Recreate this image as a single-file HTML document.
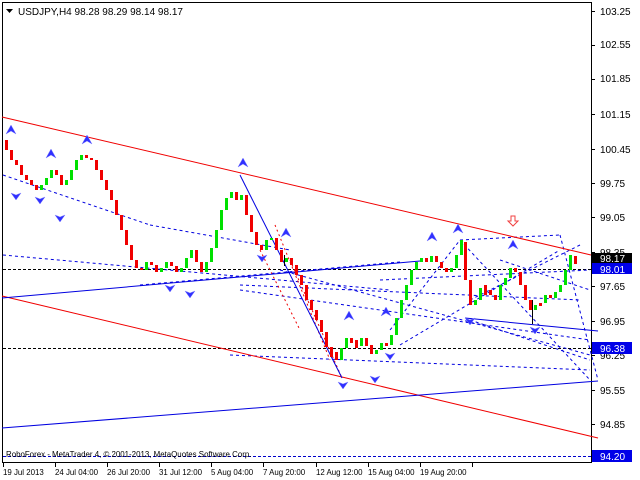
<!DOCTYPE html>
<html><head><meta charset="utf-8"><style>
body{margin:0;background:#fff;width:640px;height:480px;overflow:hidden;font-family:"Liberation Sans",sans-serif}
svg{display:block}
text{font-family:"Liberation Sans",sans-serif;font-size:10px}
text.s,.s text{font-size:7.9px}
.g{fill:#00e000}.r{fill:#f00000}
</style></head><body>
<svg width="640" height="480" viewBox="0 0 640 480">
<rect x="0" y="0" width="640" height="480" fill="#fff"/>
<rect x="2.5" y="2.5" width="589" height="460" fill="none" stroke="#000"/>
<line x1="3" y1="269.5" x2="591" y2="269.5" stroke="#000" stroke-dasharray="3,2"/>
<line x1="3" y1="348.5" x2="591" y2="348.5" stroke="#000" stroke-dasharray="3,2"/>
<line x1="3" y1="456.5" x2="591" y2="456.5" stroke="#00c" stroke-dasharray="3,2"/>
<g stroke="#0000e0" stroke-dasharray="3,3" fill="none" stroke-width="1">
<line x1="3" y1="175" x2="150" y2="225"/>
<line x1="150" y1="225" x2="290" y2="250"/>
<line x1="3" y1="255" x2="390" y2="290"/>
<line x1="140" y1="285" x2="400" y2="262"/>
<line x1="240" y1="285" x2="580" y2="300"/>
<line x1="240" y1="290" x2="590" y2="340"/>
<line x1="280" y1="270" x2="590" y2="355"/>
<line x1="390" y1="330" x2="460" y2="240"/>
<line x1="400" y1="345" x2="560" y2="250"/>
<line x1="460" y1="240" x2="560" y2="235"/>
<line x1="460" y1="240" x2="590" y2="380"/>
<line x1="380" y1="280" x2="590" y2="270"/>
<line x1="470" y1="320" x2="590" y2="360"/>
<line x1="500" y1="260" x2="590" y2="290"/>
<line x1="560" y1="235" x2="598" y2="380"/>
<line x1="470" y1="300" x2="580" y2="245"/>
<line x1="230" y1="355" x2="590" y2="370"/>
</g>
<g stroke="#f00000" stroke-dasharray="2,3" fill="none">
<line x1="275" y1="225" x2="330" y2="360"/>
<line x1="290" y1="260" x2="342" y2="378"/>
<line x1="260" y1="250" x2="300" y2="330"/>
</g>
<line x1="2" y1="117" x2="591" y2="255" stroke="#f00000"/>
<line x1="2" y1="296" x2="598" y2="438" stroke="#f00000"/>
<line x1="2" y1="298" x2="420" y2="261" stroke="#0000e0"/>
<line x1="2" y1="428" x2="598" y2="381" stroke="#0000e0"/>
<line x1="240" y1="175" x2="342" y2="378" stroke="#0000e0"/>
<line x1="465" y1="318" x2="598" y2="331" stroke="#0000e0"/>
<g>
<rect class="r" x="5" y="140" width="3" height="10"/>
<rect class="r" x="10" y="150" width="3" height="10"/>
<rect class="r" x="15" y="160" width="3" height="5"/>
<rect class="r" x="20" y="165" width="3" height="10"/>
<rect class="r" x="25" y="175" width="3" height="5"/>
<rect class="r" x="30" y="180" width="3" height="5"/>
<rect class="r" x="35" y="185" width="3" height="5"/>
<rect class="g" x="40" y="185" width="3" height="5"/>
<rect class="g" x="45" y="178" width="3" height="7"/>
<rect class="g" x="50" y="170" width="3" height="8"/>
<rect class="r" x="55" y="170" width="3" height="5"/>
<rect class="r" x="60" y="175" width="3" height="10"/>
<rect class="g" x="65" y="180" width="3" height="5"/>
<rect class="g" x="70" y="170" width="3" height="10"/>
<rect class="g" x="75" y="160" width="3" height="10"/>
<rect class="g" x="80" y="155" width="3" height="5"/>
<rect class="r" x="85" y="155" width="3" height="3"/>
<rect class="r" x="90" y="158" width="3" height="2"/>
<rect class="r" x="95" y="160" width="3" height="10"/>
<rect class="r" x="100" y="170" width="3" height="10"/>
<rect class="r" x="105" y="180" width="3" height="10"/>
<rect class="r" x="110" y="190" width="3" height="10"/>
<rect class="r" x="115" y="200" width="3" height="15"/>
<rect class="r" x="120" y="215" width="3" height="15"/>
<rect class="r" x="125" y="230" width="3" height="15"/>
<rect class="r" x="130" y="245" width="3" height="15"/>
<rect class="r" x="135" y="260" width="3" height="8"/>
<rect class="r" x="140" y="268" width="3" height="2"/>
<rect class="g" x="145" y="262" width="3" height="8"/>
<rect class="r" x="150" y="262" width="3" height="3"/>
<rect class="r" x="155" y="265" width="3" height="7"/>
<rect class="g" x="160" y="268" width="3" height="4"/>
<rect class="g" x="165" y="262" width="3" height="6"/>
<rect class="r" x="170" y="262" width="3" height="4"/>
<rect class="r" x="175" y="266" width="3" height="6"/>
<rect class="g" x="180" y="268" width="3" height="4"/>
<rect class="g" x="185" y="258" width="3" height="10"/>
<rect class="g" x="190" y="250" width="3" height="8"/>
<rect class="r" x="195" y="250" width="3" height="12"/>
<rect class="r" x="200" y="262" width="3" height="10"/>
<rect class="g" x="205" y="262" width="3" height="10"/>
<rect class="g" x="210" y="248" width="3" height="14"/>
<rect class="g" x="215" y="230" width="3" height="18"/>
<rect class="g" x="220" y="210" width="3" height="20"/>
<rect class="g" x="225" y="198" width="3" height="12"/>
<rect class="g" x="230" y="192" width="3" height="6"/>
<rect class="r" x="235" y="192" width="3" height="8"/>
<rect class="g" x="240" y="195" width="3" height="5"/>
<rect class="r" x="245" y="195" width="3" height="20"/>
<rect class="r" x="250" y="215" width="3" height="17"/>
<rect class="r" x="255" y="232" width="3" height="13"/>
<rect class="r" x="260" y="245" width="3" height="5"/>
<rect class="g" x="265" y="240" width="3" height="10"/>
<rect class="g" x="270" y="238" width="3" height="2"/>
<rect class="r" x="275" y="238" width="3" height="12"/>
<rect class="r" x="280" y="250" width="3" height="12"/>
<rect class="g" x="285" y="258" width="3" height="4"/>
<rect class="r" x="290" y="258" width="3" height="7"/>
<rect class="r" x="295" y="265" width="3" height="10"/>
<rect class="r" x="300" y="275" width="3" height="10"/>
<rect class="r" x="305" y="285" width="3" height="15"/>
<rect class="r" x="310" y="300" width="3" height="10"/>
<rect class="r" x="315" y="310" width="3" height="10"/>
<rect class="r" x="320" y="320" width="3" height="12"/>
<rect class="r" x="325" y="332" width="3" height="15"/>
<rect class="r" x="330" y="347" width="3" height="10"/>
<rect class="r" x="335" y="352" width="3" height="8"/>
<rect class="g" x="340" y="348" width="3" height="12"/>
<rect class="g" x="345" y="338" width="3" height="10"/>
<rect class="r" x="350" y="338" width="3" height="5"/>
<rect class="r" x="355" y="340" width="3" height="8"/>
<rect class="g" x="360" y="338" width="3" height="8"/>
<rect class="r" x="365" y="338" width="3" height="8"/>
<rect class="r" x="370" y="345" width="3" height="9"/>
<rect class="g" x="375" y="350" width="3" height="4"/>
<rect class="g" x="380" y="343" width="3" height="7"/>
<rect class="r" x="385" y="343" width="3" height="3"/>
<rect class="g" x="390" y="335" width="3" height="10"/>
<rect class="g" x="395" y="318" width="3" height="17"/>
<rect class="g" x="400" y="300" width="3" height="18"/>
<rect class="g" x="405" y="285" width="3" height="15"/>
<rect class="g" x="410" y="270" width="3" height="15"/>
<rect class="g" x="415" y="262" width="3" height="8"/>
<rect class="g" x="420" y="258" width="3" height="4"/>
<rect class="r" x="425" y="258" width="3" height="4"/>
<rect class="g" x="430" y="256" width="3" height="6"/>
<rect class="r" x="435" y="256" width="3" height="6"/>
<rect class="r" x="440" y="262" width="3" height="6"/>
<rect class="r" x="445" y="268" width="3" height="4"/>
<rect class="g" x="450" y="268" width="3" height="4"/>
<rect class="g" x="455" y="255" width="3" height="13"/>
<rect class="g" x="460" y="240" width="3" height="15"/>
<rect class="r" x="464" y="242" width="3" height="38"/>
<rect class="r" x="469" y="280" width="3" height="25"/>
<rect class="g" x="474" y="300" width="3" height="5"/>
<rect class="g" x="479" y="288" width="3" height="12"/>
<rect class="r" x="484" y="285" width="3" height="10"/>
<rect class="r" x="489" y="290" width="3" height="5"/>
<rect class="r" x="494" y="295" width="3" height="5"/>
<rect class="g" x="499" y="285" width="3" height="15"/>
<rect class="g" x="504" y="278" width="3" height="7"/>
<rect class="g" x="509" y="268" width="3" height="10"/>
<rect class="r" x="514" y="268" width="3" height="4"/>
<rect class="r" x="519" y="272" width="3" height="13"/>
<rect class="r" x="524" y="285" width="3" height="15"/>
<rect class="r" x="529" y="300" width="3" height="10"/>
<rect class="g" x="534" y="305" width="3" height="5"/>
<rect class="r" x="539" y="303" width="3" height="3"/>
<rect class="g" x="544" y="295" width="3" height="8"/>
<rect class="r" x="549" y="295" width="3" height="3"/>
<rect class="g" x="554" y="292" width="3" height="6"/>
<rect class="g" x="559" y="285" width="3" height="7"/>
<rect class="g" x="564" y="270" width="3" height="15"/>
<rect class="g" x="569" y="255" width="3" height="15"/>
<rect class="r" x="574" y="256" width="3" height="8"/>
</g>
<g stroke="#000">
<line x1="284.5" y1="255" x2="284.5" y2="266"/>
<line x1="532.5" y1="300" x2="532.5" y2="324"/>
</g>
<g fill="#3030ff" stroke="#8080ff" stroke-width="0.5">
<polygon points="11,125 6,134 11,131 16,134"/>
<polygon points="87,135 82,144 87,141 92,144"/>
<polygon points="51,149 46,158 51,155 56,158"/>
<polygon points="243,158 238,167 243,164 248,167"/>
<polygon points="458,224 453,233 458,230 463,233"/>
<polygon points="513,240 508,249 513,246 518,249"/>
<polygon points="432,232 427,241 432,238 437,241"/>
<polygon points="349,311 344,320 349,317 354,320"/>
<polygon points="386,307 381,316 386,313 391,316"/>
<polygon points="286,228 281,237 286,234 291,237"/>
<polygon points="16,200 11,193 16,195 21,193"/>
<polygon points="40,204 35,197 40,199 45,197"/>
<polygon points="60,222 55,215 60,217 65,215"/>
<polygon points="170,292 165,285 170,287 175,285"/>
<polygon points="190,298 185,291 190,293 195,291"/>
<polygon points="262,262 257,255 262,257 267,255"/>
<polygon points="343,389 338,382 343,384 348,382"/>
<polygon points="375,383 370,376 375,378 380,376"/>
<polygon points="470,325 465,318 470,320 475,318"/>
<polygon points="535,334 530,327 535,329 540,327"/>
<polygon points="390,360 385,353 390,355 395,353"/>
</g>
<path d="M511,216 h4 v5 h3 l-5,5 l-5,-5 h3z" fill="none" stroke="#f04040"/>
<polygon points="6,9 13,9 9.5,13" fill="#000"/>
<text x="18" y="15" fill="#000">USDJPY,H4  98.28 98.29 98.14 98.17</text>
<text class="s" x="6" y="457" fill="#000">RoboForex - MetaTrader 4, © 2001-2013, MetaQuotes Software Corp.</text>
<g fill="#000">
<text x="600" y="15">103.25</text>
<text x="600" y="48">102.55</text>
<text x="600" y="82">101.85</text>
<text x="600" y="118">101.15</text>
<text x="600" y="153">100.45</text>
<text x="600" y="187">99.75</text>
<text x="600" y="221">99.05</text>
<text x="600" y="256">98.35</text>
<text x="600" y="290">97.65</text>
<text x="600" y="325">96.95</text>
<text x="600" y="359">96.25</text>
<text x="600" y="394">95.55</text>
<text x="600" y="428">94.85</text>
</g>
<g stroke="#000">
<line x1="591" y1="11.5" x2="595" y2="11.5"/><line x1="591" y1="45.5" x2="595" y2="45.5"/>
<line x1="591" y1="79.5" x2="595" y2="79.5"/><line x1="591" y1="114.5" x2="595" y2="114.5"/>
<line x1="591" y1="149.5" x2="595" y2="149.5"/><line x1="591" y1="183.5" x2="595" y2="183.5"/>
<line x1="591" y1="217.5" x2="595" y2="217.5"/><line x1="591" y1="252.5" x2="595" y2="252.5"/>
<line x1="591" y1="286.5" x2="595" y2="286.5"/><line x1="591" y1="321.5" x2="595" y2="321.5"/>
<line x1="591" y1="355.5" x2="595" y2="355.5"/><line x1="591" y1="390.5" x2="595" y2="390.5"/>
<line x1="591" y1="424.5" x2="595" y2="424.5"/>
</g>
<rect x="592" y="253" width="40" height="11" fill="#000"/>
<text x="600" y="262" fill="#fff">98.17</text>
<rect x="592" y="263" width="40" height="11" fill="#0000e8"/>
<text x="600" y="273" fill="#fff">98.01</text>
<rect x="592" y="342" width="40" height="12" fill="#0000e8"/>
<text x="600" y="352" fill="#fff">96.38</text>
<rect x="592" y="450" width="40" height="12" fill="#0000e8"/>
<text x="600" y="460" fill="#fff">94.20</text>
<g stroke="#000">
<line x1="3.5" y1="462" x2="3.5" y2="467"/><line x1="55.5" y1="462" x2="55.5" y2="467"/>
<line x1="107.5" y1="462" x2="107.5" y2="467"/><line x1="159.5" y1="462" x2="159.5" y2="467"/>
<line x1="211.5" y1="462" x2="211.5" y2="467"/><line x1="263.5" y1="462" x2="263.5" y2="467"/>
<line x1="316.5" y1="462" x2="316.5" y2="467"/><line x1="368.5" y1="462" x2="368.5" y2="467"/>
<line x1="420.5" y1="462" x2="420.5" y2="467"/><line x1="472.5" y1="462" x2="472.5" y2="467"/>
</g>
<g fill="#000" class="s">
<text x="3" y="475">19 Jul 2013</text>
<text x="55" y="475">24 Jul 04:00</text>
<text x="107" y="475">26 Jul 20:00</text>
<text x="159" y="475">31 Jul 12:00</text>
<text x="211" y="475">5 Aug 04:00</text>
<text x="263" y="475">7 Aug 20:00</text>
<text x="316" y="475">12 Aug 12:00</text>
<text x="368" y="475">15 Aug 04:00</text>
<text x="420" y="475">19 Aug 20:00</text>
</g>
</svg>
</body></html>
